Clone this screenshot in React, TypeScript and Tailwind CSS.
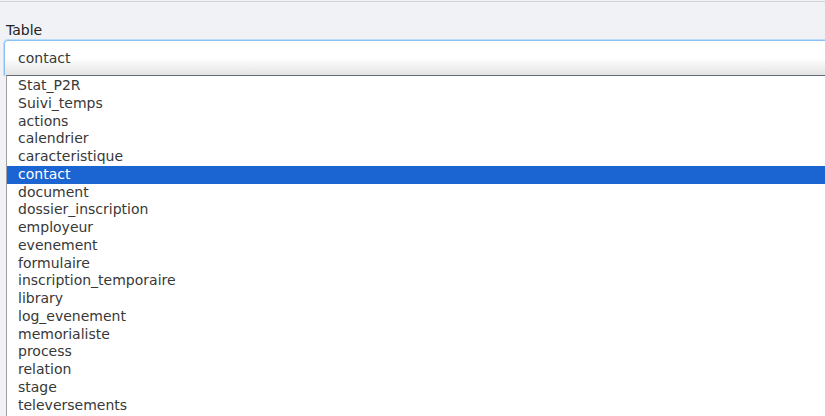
import React from "react";

const items = [
  "Stat_P2R",
  "Suivi_temps",
  "actions",
  "calendrier",
  "caracteristique",
  "contact",
  "document",
  "dossier_inscription",
  "employeur",
  "evenement",
  "formulaire",
  "inscription_temporaire",
  "library",
  "log_evenement",
  "memorialiste",
  "process",
  "relation",
  "stage",
  "televersements",
];

export default function App() {
  return (
    <div
      className="h-[416px] w-[825px] overflow-hidden bg-[#f1f2f6] pt-px text-[14px] text-[#383838]"
      style={{ fontFamily: '"DejaVu Sans", sans-serif' }}
    >
      <div className="border-t border-[#d2d3d8]" />
      <div className="pl-[6px] pt-[20px] leading-[17px] text-[#222]">Table</div>
      <div className="ml-[4px] mt-[1px] h-[35px] w-[830px] rounded-t-[4px] border border-b-0 border-[#8cc0f4] bg-gradient-to-b from-white from-50% to-[#e4e4e4] pl-[13px] pt-[9px] leading-[17px] shadow-[0_0_0_1px_#bcdcfb]">
        contact
      </div>
      <div className="ml-[6px] border-l border-t border-l-[#a0a0a0] border-t-[#5f6a76] bg-white pb-[20px] pt-px">
        {items.map((it) => (
          <div
            key={it}
            className={
              "h-[17.75px] pl-[11px] leading-[17.75px] " +
              (it === "contact" ? "bg-[#1b65d3] text-white" : "")
            }
          >
            {it}
          </div>
        ))}
      </div>
    </div>
  );
}
